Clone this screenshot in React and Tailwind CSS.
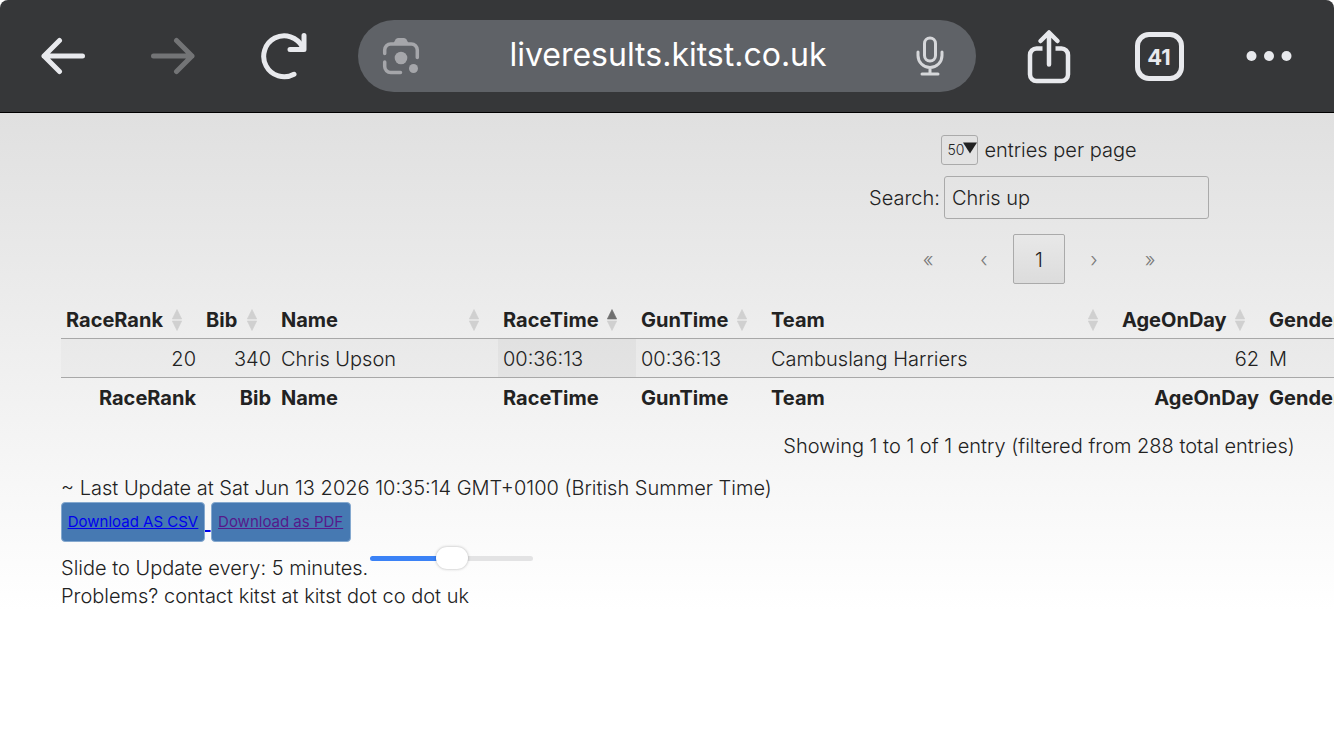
import { useState } from 'react';
import clsx from 'clsx';

const COLUMNS = [
  { name: 'RaceRank', width: 'w-[140px]', numeric: true },
  { name: 'Bib', width: 'w-[75px]', numeric: true },
  { name: 'Name', width: 'w-[222px]' },
  { name: 'RaceTime', width: 'w-[138px]', sorted: true },
  { name: 'GunTime', width: 'w-[130px]' },
  { name: 'Team', width: 'w-[351px]' },
  { name: 'AgeOnDay', width: 'w-[147px]', numeric: true },
  { name: 'Gender', width: 'w-auto' },
];

const ROWS = [
  ['20', '340', 'Chris Upson', '00:36:13', '00:36:13', 'Cambuslang Harriers', '62', 'M'],
];

const PAGES = [
  { text: '«', label: 'First' },
  { text: '‹', label: 'Previous' },
  { text: '1', label: 'Page 1', current: true },
  { text: '›', label: 'Next' },
  { text: '»', label: 'Last' },
];

const BackIcon = () => (
  <svg width="46" height="38" viewBox="0 0 46 38" fill="none" stroke="currentColor" strokeWidth="5" strokeLinecap="round" strokeLinejoin="round">
    <path d="M42.5 19H4M19.5 3.5L4 19l15.500 15.500" />
  </svg>
);

const ForwardIcon = () => (
  <svg width="46" height="38" viewBox="0 0 46 38" fill="none" stroke="currentColor" strokeWidth="5" strokeLinecap="round" strokeLinejoin="round">
    <path d="M3.500 19H42M26.500 3.500L42 19 26.500 34.500" />
  </svg>
);

const ReloadIcon = () => (
  <svg width="48" height="48" viewBox="-2 0 48 48" fill="none" stroke="currentColor" strokeWidth="5" strokeLinecap="round" strokeLinejoin="round">
    <path d="M33 42.300A20.500 20.500 0 1 1 41.500 15" />
    <path d="M43 3.500V17.500H29" />
  </svg>
);

const LensIcon = () => (
  <svg width="38" height="38" viewBox="0 0 38 38" fill="none" stroke="currentColor" strokeWidth="3.500" strokeLinecap="round">
    <path d="M2.700 16.500V13a6 6 0 0 1 6-6h20.600a6 6 0 0 1 6 6v7.500" />
    <path d="M2.700 25v4.500a6 6 0 0 0 6 6h9.800" />
    <path d="M11 7l2.500-4.500a3 3 0 0 1 2.500-1.500h6a3 3 0 0 1 2.500 1.500L27 7z" fill="currentColor" stroke="none" />
    <circle cx="19" cy="21" r="6.300" fill="currentColor" stroke="none" />
    <circle cx="31.500" cy="31.500" r="4.500" fill="currentColor" stroke="none" />
  </svg>
);

const MicIcon = () => (
  <svg width="28" height="40" viewBox="0 0 28 40" fill="none" stroke="currentColor" strokeWidth="3" strokeLinecap="round">
    <rect x="8.500" y="2" width="11" height="23" rx="5.500" />
    <path d="M2 16v3.500a12 12 0 0 0 24 0V16M14 32v6M6 38h16" />
  </svg>
);

const ShareIcon = () => (
  <svg width="44" height="56" viewBox="0 -1 44 56" fill="none" stroke="currentColor" strokeWidth="4.500" strokeLinecap="round" strokeLinejoin="round">
    <path d="M22 35.500V5M13.500 12L22 3.500 30.500 12" />
    <path d="M15.500 19.500H9.500a6.500 6.500 0 0 0-6.500 6.500v19.500a6.500 6.500 0 0 0 6.500 6.500h25a6.500 6.500 0 0 0 6.500-6.500v-19.500a6.500 6.500 0 0 0-6.500-6.500H28.500" strokeLinecap="butt" />
  </svg>
);

const MoreIcon = () => (
  <svg width="46" height="12" viewBox="0 0 46 12" fill="currentColor">
    <circle cx="5.500" cy="6" r="5" />
    <circle cx="23" cy="6" r="5" />
    <circle cx="40.500" cy="6" r="5" />
  </svg>
);

const SortIcon = ({ ascending }) => (
  <svg width="10" height="24" viewBox="0 0 10 24" className="shrink-0">
    <path d="M5 1.500L9.700 11H.3z" fill={ascending ? '#707070' : '#d0d0d0'} stroke={ascending ? '#707070' : '#d0d0d0'} strokeWidth=".6" strokeLinejoin="round" />
    <path d="M5 22.500L9.700 13H.3z" fill="#d0d0d0" stroke="#d0d0d0" strokeWidth=".6" strokeLinejoin="round" />
  </svg>
);

const BarButton = ({ label, disabled, children }) => (
  <button
    type="button"
    aria-label={label}
    disabled={disabled}
    className={clsx('flex h-full w-[110px] shrink-0 items-center justify-center', disabled ? 'text-[#737476]' : 'text-[#e8e9ed]')}
  >
    {children}
  </button>
);

function BrowserBar() {
  return (
    <header className="flex h-[113px] items-center rounded-t-lg border-b border-black bg-[#363739] pr-[10px] pl-2">
      <BarButton label="Back"><BackIcon /></BarButton>
      <BarButton label="Forward" disabled><ForwardIcon /></BarButton>
      <BarButton label="Reload"><ReloadIcon /></BarButton>
      <div className="mr-[18px] ml-5 flex h-[72px] min-w-0 flex-1 items-center justify-between rounded-full bg-[#5f6267] pr-8 pl-6">
        <button type="button" aria-label="Search with camera" className="text-[#a5a6aa]"><LensIcon /></button>
        <span className="pb-[2px] text-[32px] leading-10 font-normal text-white">liveresults.kitst.co.uk</span>
        <button type="button" aria-label="Voice search" className="text-[#d6d7da]"><MicIcon /></button>
      </div>
      <BarButton label="Share"><ShareIcon /></BarButton>
      <BarButton label="Tabs">
        <span className="flex size-[49px] items-center justify-center rounded-[14px] border-5 border-current pt-[2px] text-[22px] leading-6 font-bold">41</span>
      </BarButton>
      <BarButton label="More"><MoreIcon /></BarButton>
    </header>
  );
}

function TableControls({ search, onSearch }) {
  return (
    <div className="flex flex-col items-center">
      <div className="flex h-[30px] items-center gap-[6px]">
        <div className="relative flex">
          <select id="page-length" defaultValue="50" className="h-[30px] w-[37px] appearance-none rounded-[3px] border border-[#aaa] pl-[5px] text-[14px]">
            <option>10</option>
            <option>25</option>
            <option>50</option>
            <option>100</option>
          </select>
          <svg width="14" height="12" viewBox="0 0 14 12" className="pointer-events-none absolute top-[7px] right-px">
            <path d="M0 .5h14L7 11.500z" fill="#222" />
          </svg>
        </div>
        <label htmlFor="page-length">entries per page</label>
      </div>
      <div className="mt-[11px] flex items-center gap-1">
        <label htmlFor="search">Search:</label>
        <input
          id="search"
          type="search"
          value={search}
          onChange={(e) => onSearch(e.target.value)}
          className="h-[43px] w-[265px] appearance-none rounded-[3px] border border-[#aaa] px-[7px]"
        />
      </div>
      <nav aria-label="pagination" className="mt-[15px] flex gap-[2px]">
        {PAGES.map((page) => (
          <button
            key={page.label}
            type="button"
            aria-label={page.label}
            disabled={!page.current}
            className={clsx(
              'h-[50px] rounded-[2px] pt-[2px]',
              page.current ? 'w-[52px] border border-[#aaa] bg-linear-to-b from-[#e8e8e8] to-[#dcdcdc]' : 'w-[54px] text-[#7b7b7b]'
            )}
          >
            {page.text}
          </button>
        ))}
      </nav>
    </div>
  );
}

function ResultsTable() {
  return (
    <table className="mt-[17px] w-full table-fixed border-collapse">
      <thead>
        <tr className="h-[37px] border-b border-[#a8a8a8]">
          {COLUMNS.map((col) => (
            <th key={col.name} scope="col" className={clsx('px-0 pt-[2px] pb-0', col.width)}>
              <button type="button" className="flex w-full items-center justify-between pr-[19px] pl-[5px] font-bold">
                {col.name}
                <SortIcon ascending={col.sorted} />
              </button>
            </th>
          ))}
        </tr>
      </thead>
      <tbody>
        {ROWS.map((row) => (
          <tr key={row[0]} className="h-[39px] border-b border-[#a8a8a8] bg-black/2">
            {row.map((cell, i) => (
              <td key={COLUMNS[i].name} className={clsx('px-[5px] pt-[2px] pb-0', COLUMNS[i].numeric && 'text-right', COLUMNS[i].sorted && 'bg-black/3')}>
                {cell}
              </td>
            ))}
          </tr>
        ))}
      </tbody>
      <tfoot>
        <tr className="h-[39px]">
          {COLUMNS.map((col) => (
            <th key={col.name} className={clsx('px-[5px] pt-[2px] pb-0 font-bold', col.numeric ? 'text-right' : 'text-left')}>{col.name}</th>
          ))}
        </tr>
      </tfoot>
    </table>
  );
}

export default function App() {
  const [search, setSearch] = useState('Chris up');
  const [minutes, setMinutes] = useState(5);

  return (
    <div className="min-h-screen bg-white font-['Inter','Liberation_Sans',sans-serif] text-[20px] leading-7 font-[350] text-[#222]">
      <BrowserBar />
      <main className="bg-linear-to-b from-[#e0e0e0] to-white pt-[22px] pl-[61px]">
        {/* the table is wider than the page and scrolls sideways */}
        <div className="overflow-x-auto [scrollbar-width:none]">
          <div className="w-[1956px]">
            <TableControls search={search} onSearch={setSearch} />
            <ResultsTable />
            <p className="mt-4 text-center">Showing 1 to 1 of 1 entry (filtered from 288 total entries)</p>
          </div>
        </div>

        <p className="mt-[14px]">~ Last Update at Sat Jun 13 2026 10:35:14 GMT+0100 (British Summer Time)</p>
        <div className="flex h-10 items-center font-normal">
          <a href="#csv" className="flex items-center text-[#0000ee] underline">
            <span className="inline-flex h-10 w-[144px] items-center justify-center rounded-[4px] border border-[#85a9cf] bg-[#4679b2] text-[15px] underline">Download AS CSV</span>
            <span className="whitespace-pre"> </span>
          </a>
          <a href="#pdf" className="inline-flex h-10 w-[140px] items-center justify-center rounded-[4px] border border-[#85a9cf] bg-[#4679b2] text-[15px] text-[#551a8b] underline">Download as PDF</a>
        </div>
        <div className="flex items-start gap-[2px] pt-[5px]">
          <label htmlFor="interval" className="pt-[7px]">Slide to Update every: {minutes} minutes.</label>
          <input
            id="interval"
            type="range"
            min="0"
            max="10"
            value={minutes}
            onChange={(e) => setMinutes(Number(e.target.value))}
            style={{ '--fill': `${minutes * 10}%` }}
            className="h-[22px] w-[163px] appearance-none bg-transparent [&::-webkit-slider-runnable-track]:h-[5px] [&::-webkit-slider-runnable-track]:rounded-full [&::-webkit-slider-runnable-track]:bg-[linear-gradient(to_right,#3b82f6_var(--fill),#e3e3e4_var(--fill))] [&::-webkit-slider-thumb]:-mt-[9px] [&::-webkit-slider-thumb]:h-[22px] [&::-webkit-slider-thumb]:w-8 [&::-webkit-slider-thumb]:appearance-none [&::-webkit-slider-thumb]:rounded-full [&::-webkit-slider-thumb]:bg-white [&::-webkit-slider-thumb]:shadow-[0_0_3px_rgba(0,0,0,0.3)]"
          />
        </div>
        <p>Problems? contact kitst at kitst dot co dot uk</p>
      </main>
    </div>
  );
}
